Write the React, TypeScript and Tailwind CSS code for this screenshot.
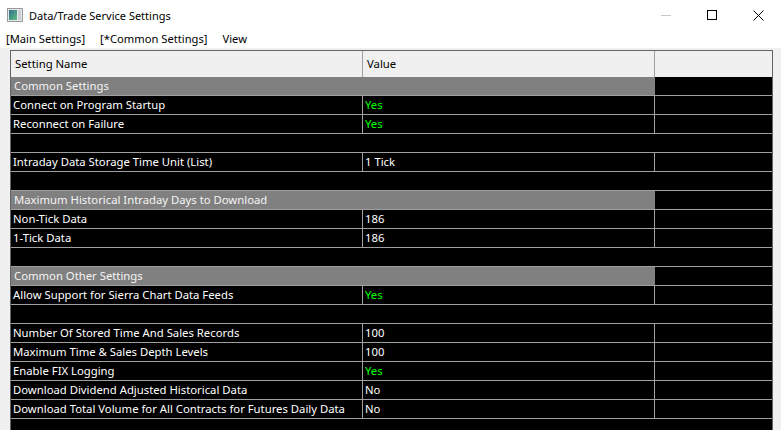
import React from "react";

type Row =
  | { kind: "group"; name: string }
  | { kind: "blank" }
  | { kind: "item"; name: string; value: string; green?: boolean };

const rows: Row[] = [
  { kind: "group", name: "Common Settings" },
  { kind: "item", name: "Connect on Program Startup", value: "Yes", green: true },
  { kind: "item", name: "Reconnect on Failure", value: "Yes", green: true },
  { kind: "blank" },
  { kind: "item", name: "Intraday Data Storage Time Unit (List)", value: "1 Tick" },
  { kind: "blank" },
  { kind: "group", name: "Maximum Historical Intraday Days to Download" },
  { kind: "item", name: "Non-Tick Data", value: "186" },
  { kind: "item", name: "1-Tick Data", value: "186" },
  { kind: "blank" },
  { kind: "group", name: "Common Other Settings" },
  { kind: "item", name: "Allow Support for Sierra Chart Data Feeds", value: "Yes", green: true },
  { kind: "blank" },
  { kind: "item", name: "Number Of Stored Time And Sales Records", value: "100" },
  { kind: "item", name: "Maximum Time & Sales Depth Levels", value: "100" },
  { kind: "item", name: "Enable FIX Logging", value: "Yes", green: true },
  { kind: "item", name: "Download Dividend Adjusted Historical Data", value: "No" },
  { kind: "item", name: "Download Total Volume for All Contracts for Futures Daily Data", value: "No" },
  { kind: "blank" },
  { kind: "blank" },
];

function AppIcon() {
  return (
    <svg width="16" height="14" viewBox="0 0 16 14">
      <defs>
        <linearGradient id="g" x1="0" y1="0" x2="1" y2="1">
          <stop offset="0" stopColor="#2f6f8f" />
          <stop offset="1" stopColor="#5fbf7f" />
        </linearGradient>
      </defs>
      <rect x="0.5" y="0.5" width="15" height="13" fill="#e8e8e8" stroke="#9a9a9a" />
      <rect x="2" y="2" width="8" height="10" fill="url(#g)" />
      <rect x="11" y="2" width="3" height="10" fill="#c8d0d4" />
    </svg>
  );
}

export default function App() {
  return (
    <div
      className="w-[781px] h-[430px] overflow-hidden bg-white text-[11.3px] text-black"
      style={{ fontFamily: '"Noto Sans", "Open Sans", sans-serif' }}
    >
      {/* Title bar */}
      <div className="h-[30px] flex items-center bg-white">
        <div className="ml-[7px] mr-[6px] flex items-center">
          <AppIcon />
        </div>
        <span className="leading-none text-[11px]">Data/Trade Service Settings</span>
        <div className="ml-auto flex h-full">
          <div className="w-[46px] h-full flex items-center justify-center">
            <div className="w-[10px] h-px bg-[#c8c8c8]" />
          </div>
          <div className="w-[46px] h-full flex items-center justify-center">
            <div className="w-[10px] h-[10px] border border-black" />
          </div>
          <div className="w-[46px] h-full flex items-center justify-center">
            <svg width="11" height="11" viewBox="0 0 11 11">
              <path d="M0.5 0.5 L10.5 10.5 M10.5 0.5 L0.5 10.5" stroke="#000" strokeWidth="1" />
            </svg>
          </div>
        </div>
      </div>
      {/* Menu bar */}
      <div className="h-[18px] flex items-center pl-[6px] gap-[15px] leading-none text-[11.2px]">
        <span>[Main Settings]</span>
        <span>[*Common Settings]</span>
        <span>View</span>
      </div>
      {/* Grid area */}
      <div className="h-[382px] bg-[#f0f0f0] pt-[2px] pl-[10px] pr-[8px]">
        <div className="h-full border-t border-l border-r border-[#646464] bg-black overflow-hidden">
          <div className="h-[26px] flex bg-[#f0f0f0] text-black">
            <div className="w-[352px] border-r border-[#a0a0a0] pl-[4px] flex items-center">Setting Name</div>
            <div className="w-[292px] border-r border-[#a0a0a0] pl-[4px] flex items-center">Value</div>
            <div className="flex-1" />
          </div>
          {rows.map((r, i) => {
            if (r.kind === "blank") {
              return <div key={i} className="h-[19px] border-b border-[#a0a0a0] bg-black" />;
            }
            if (r.kind === "group") {
              return (
                <div key={i} className="h-[19px] border-b border-[#a0a0a0] flex">
                  <div className="w-[644px] bg-[#808080] text-[#f4f4f4] pl-[3px] flex items-center">{r.name}</div>
                  <div className="flex-1 bg-black" />
                </div>
              );
            }
            return (
              <div key={i} className="h-[19px] border-b border-[#a0a0a0] flex text-white">
                <div className="w-[352px] border-r border-[#a0a0a0] pl-[2px] flex items-center whitespace-nowrap">{r.name}</div>
                <div
                  className={
                    "w-[292px] border-r border-[#a0a0a0] pl-[2px] flex items-center " +
                    (r.green ? "text-[#00ff00]" : "text-white")
                  }
                >
                  {r.value}
                </div>
                <div className="flex-1" />
              </div>
            );
          })}
        </div>
      </div>
    </div>
  );
}
